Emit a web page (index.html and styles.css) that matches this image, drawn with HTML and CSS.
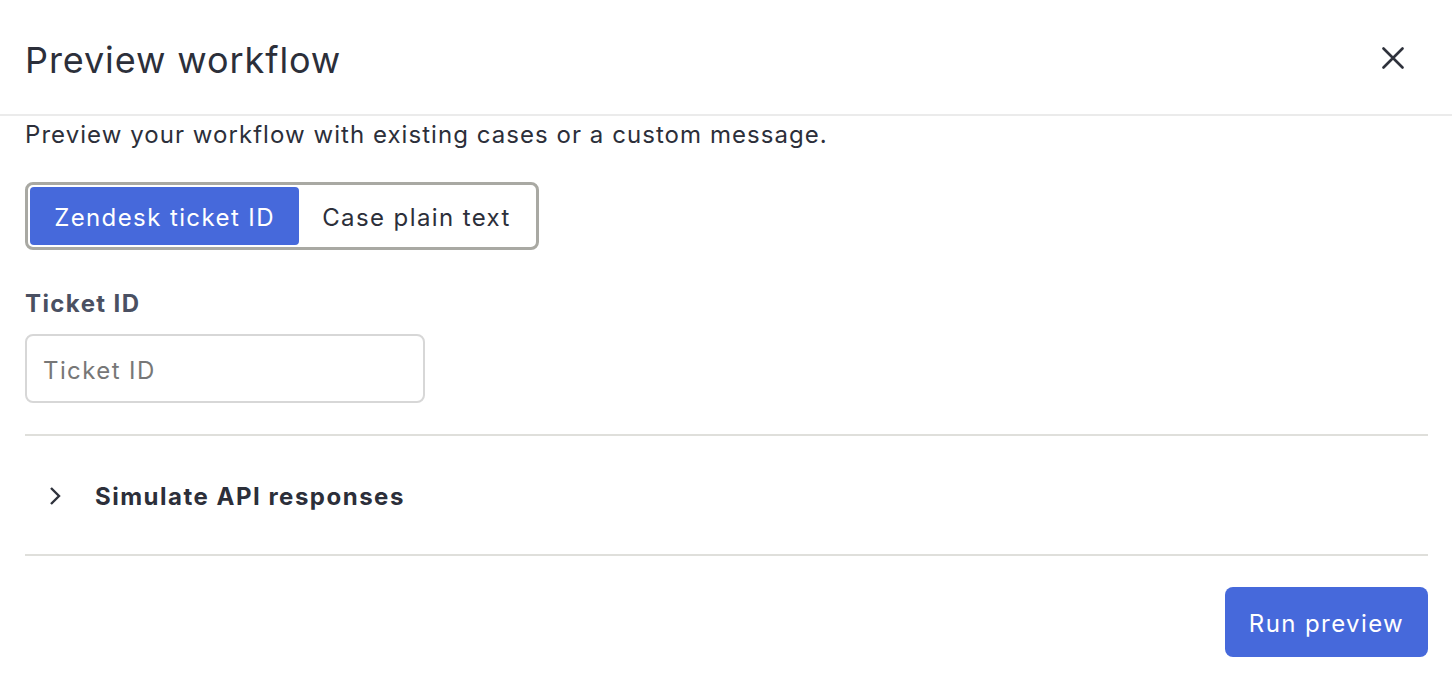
FILE: index.html
```html
<!DOCTYPE html>
<html>
<head>
<meta charset="utf-8">
<link rel="stylesheet" href="styles.css">
</head>
<body>
<div class="modal">
  <header class="header">
    <h1 class="title">Preview workflow</h1>
    <button class="close" aria-label="Close">
      <svg width="22" height="22" viewBox="0 0 22 22"><path d="M1.5 1.5 L20.5 20.5 M20.5 1.5 L1.5 20.5" stroke="#2f323c" stroke-width="2.6" stroke-linecap="round" fill="none"/></svg>
    </button>
  </header>
  <div class="body">
    <p class="desc">Preview your workflow with existing cases or a custom message.</p>
    <div class="seg">
      <button class="seg-btn active">Zendesk ticket ID</button>
      <button class="seg-btn">Case plain text</button>
    </div>
    <label class="label">Ticket ID</label>
    <input class="input" type="text" placeholder="Ticket ID">
    <div class="accordion">
      <svg class="chev" width="16" height="22" viewBox="0 0 16 22"><path d="M4 3 L12 11 L4 19" stroke="#2f323c" stroke-width="2.4" fill="none"/></svg>
      <span class="acc-title">Simulate API responses</span>
    </div>
    <div class="footer">
      <button class="run">Run preview</button>
    </div>
  </div>
</div>
</body>
</html>
```
FILE: styles.css
```css
* { box-sizing: border-box; }
html, body { margin: 0; padding: 0; background: #fff; }
body { font-family: Inter, "Noto Sans", sans-serif; color: #2c2f3a; }
.modal { width: 1452px; height: 694px; }
.header {
  height: 116px;
  border-bottom: 2px solid #ebebeb;
  display: flex;
  align-items: center;
  justify-content: space-between;
  padding: 6px 48px 0 25px;
}
.title { margin: 0; font-size: 36px; font-weight: 400; line-height: 1; letter-spacing: 0.9px; }
.close { background: none; border: 0; padding: 0; width: 22px; height: 22px; display: flex; cursor: pointer; margin-bottom: 4px; }
.body { padding: 0 24px 0 25px; }
.desc { margin: 0; font-size: 24px; line-height: 36px; height: 36px; letter-spacing: 1.05px; padding-top: 1px; }
.seg {
  margin-top: 30px;
  display: inline-flex;
  width: 514px;
  height: 68px;
  border: 3px solid #a9a9a3;
  border-radius: 8px;
  padding: 2px;
}
.seg-btn {
  font-family: inherit;
  font-size: 24px;
  letter-spacing: 1.4px;
  color: #2c2f3a;
  border: 0;
  background: #fff;
  border-radius: 4px;
  padding: 2px 0 0;
  height: 100%;
  flex: 0 0 auto;
}
.seg-btn.active { background: #4669db; color: #fff; width: 269px; }
.seg-btn:not(.active) { flex: 1; }
.label { display: block; margin-top: 36px; font-size: 24px; font-weight: 700; color: #4a5062; line-height: 36px; letter-spacing: 1.4px; }
.input {
  display: block;
  margin-top: 12px;
  width: 400px;
  height: 69px;
  border: 2px solid #d7d7d7;
  border-radius: 8px;
  font-family: inherit;
  font-size: 24px;
  letter-spacing: 1.4px;
  padding: 3px 16px 0;
  color: #2c2f3a;
}
.input::placeholder { color: #777; }
.accordion {
  margin-top: 31px;
  height: 122px;
  border-top: 2px solid #dfdfdb;
  border-bottom: 2px solid #dfdfdb;
  display: flex;
  align-items: center;
  padding-left: 22px;
  padding-top: 2px;
}
.chev { margin-right: 32px; }
.acc-title { font-size: 24px; font-weight: 700; color: #2c2f3a; letter-spacing: 1.5px; }
.footer { display: flex; justify-content: flex-end; margin-top: 31px; }
.run {
  font-family: inherit;
  background: #4669db;
  color: #fff;
  border: 0;
  border-radius: 8px;
  font-size: 24px;
  letter-spacing: 1.4px;
  width: 203px;
  height: 70px;
  padding: 2px 0 0;
}
```
